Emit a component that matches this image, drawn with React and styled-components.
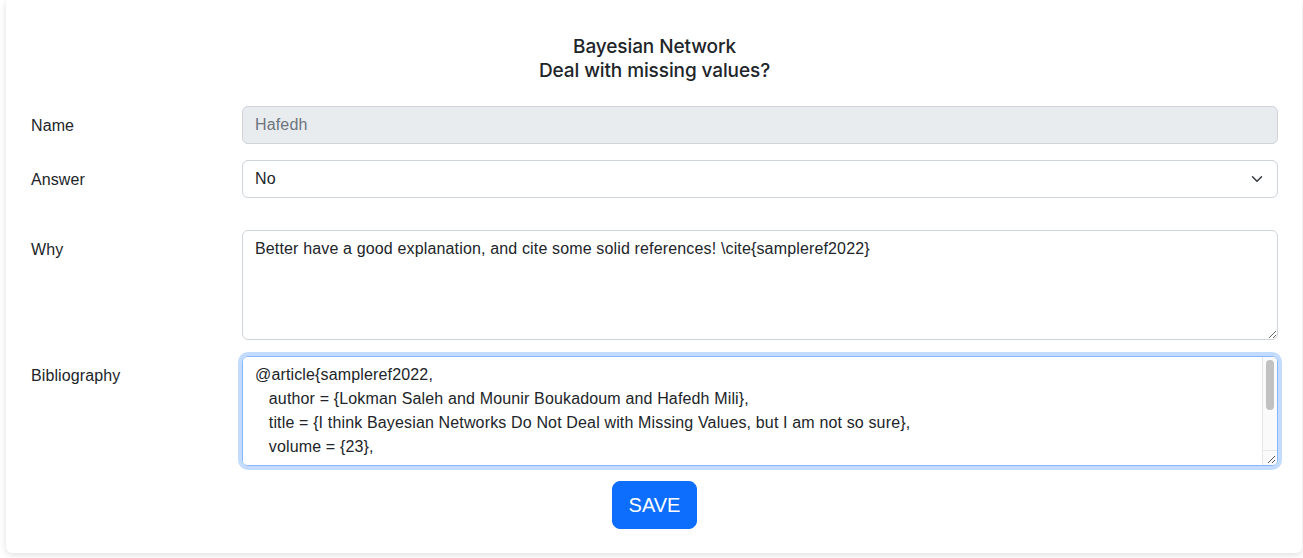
import styled, { createGlobalStyle } from "styled-components";

const GlobalStyle = createGlobalStyle`
  body {
    margin: 0;
    background: #ffffff;
    font-family: "Liberation Sans", Arial, sans-serif;
    color: #212529;
  }
`;

const BIB = `@article{sampleref2022,
   author = {Lokman Saleh and Mounir Boukadoum and Hafedh Mili},
   title = {I think Bayesian Networks Do Not Deal with Missing Values, but I am not so sure},
   volume = {23},
   number = {1},
   pages = {1--12},
   year = {2022},
   journal = {Journal of Sample References}
}`;

const App = () => {
  return (
    <Page>
      <GlobalStyle />
      <Card>
        <Title>
          Bayesian Network
          <br />
          Deal with missing values?
        </Title>

        <Form>
          <Row>
            <Label>Name</Label>
            <Input value="Hafedh" readOnly disabled />
          </Row>

          <Row>
            <Label>Answer</Label>
            <FieldWrap>
              <Select defaultValue="No">
                <option>Yes</option>
                <option>No</option>
              </Select>
              <Chevron viewBox="0 0 16 16" width="16" height="12">
                <path
                  d="m2 5 6 6 6-6"
                  fill="none"
                  stroke="#343a40"
                  strokeWidth="2"
                  strokeLinecap="round"
                  strokeLinejoin="round"
                />
              </Chevron>
            </FieldWrap>
          </Row>

          <Row $gapTop={16}>
            <Label>Why</Label>
            <TextArea
              rows={4}
              spellCheck={false}
              defaultValue="Better have a good explanation, and cite some solid references! \cite{sampleref2022}"
            />
          </Row>

          <Row>
            <Label>Bibliography</Label>
            <FieldWrap>
              <TextArea rows={4} spellCheck={false} $focused defaultValue={BIB} />
              <BottomClip />
              <ScrollTrack>
                <ScrollThumb />
                <ResizeCorner>
                  <svg width="13" height="13" viewBox="0 0 13 13">
                    <path d="M11 4 4 11M11 8 8 11" stroke="#555" strokeWidth="1" />
                  </svg>
                </ResizeCorner>
              </ScrollTrack>
            </FieldWrap>
          </Row>

          <Actions>
            <SaveButton>SAVE</SaveButton>
          </Actions>
        </Form>
      </Card>
    </Page>
  );
};

export default App;

const Page = styled.div`
  padding: 0 1px 5px 6px;
  height: 558px;
  box-sizing: border-box;
  overflow: hidden;
`;

const Card = styled.div`
  background: #ffffff;
  height: 553px;
  box-sizing: border-box;
  padding: 35px 24px 24px 25px;
  border-radius: 0 0 6px 6px;
  box-shadow: 0 2px 7px rgba(0, 0, 0, 0.13);
`;

const Title = styled.h5`
  margin: 0 0 23px;
  text-align: center;
  font-family: Inter, "Liberation Sans", sans-serif;
  font-size: 19px;
  font-weight: 500;
  line-height: 24px;
  letter-spacing: -0.1px;
  color: #212529;
`;

const Form = styled.div`
  display: flex;
  flex-direction: column;
`;

const Row = styled.div`
  display: grid;
  grid-template-columns: 211px 1fr;
  margin-top: ${(p) => p.$gapTop || 0}px;
  margin-bottom: 16px;
`;

const Label = styled.label`
  padding-top: 8px;
  font-size: 16px;
  line-height: 24px;
  letter-spacing: 0.1px;
`;

const fieldBase = `
  width: 100%;
  box-sizing: border-box;
  font-family: "Liberation Sans", Arial, sans-serif;
  font-size: 16px;
  line-height: 24px;
  letter-spacing: 0.15px;
  padding: 6px 12px;
  border: 1px solid #ced4da;
  border-radius: 6px;
  color: #212529;
  background: #ffffff;
  outline: none;
  margin: 0;
`;

const Input = styled.input`
  ${fieldBase}
  height: 38px;
  background: #e9ecef;
  color: #6c757d;
  -webkit-text-fill-color: #6c757d;
  opacity: 1;
`;

const FieldWrap = styled.div`
  position: relative;
`;

const Select = styled.select`
  ${fieldBase}
  height: 38px;
  appearance: none;
  -webkit-appearance: none;
  padding-right: 36px;
`;

const Chevron = styled.svg`
  position: absolute;
  right: 13px;
  top: 13px;
  pointer-events: none;
`;

const TextArea = styled.textarea`
  ${fieldBase}
  height: 110px;
  resize: vertical;
  display: block;
  white-space: pre-wrap;
  padding-right: ${(p) => (p.$focused ? "28px" : "12px")};
  border-color: ${(p) => (p.$focused ? "#86b7fe" : "#ced4da")};
  box-shadow: ${(p) =>
    p.$focused ? "0 0 0 4px rgba(13, 110, 253, 0.25)" : "none"};
`;

const BottomClip = styled.div`
  position: absolute;
  left: 1px;
  right: 16px;
  bottom: 1px;
  height: 7px;
  background: #ffffff;
  border-radius: 0 0 0 5px;
  pointer-events: none;
`;

const ScrollTrack = styled.div`
  position: absolute;
  top: 1px;
  right: 1px;
  bottom: 1px;
  width: 14px;
  background: #fafafa;
  border-left: 1px solid #e8e8e8;
  border-radius: 0 5px 5px 0;
  display: flex;
  flex-direction: column;
  justify-content: space-between;
  pointer-events: none;
`;

const ScrollThumb = styled.div`
  margin: 3px 3px 0 3px;
  height: 50px;
  background: #c1c1c1;
  border-radius: 4px;
`;

const ResizeCorner = styled.div`
  height: 15px;
  border-top: 1px solid #e8e8e8;
  display: flex;
  align-items: flex-end;
  justify-content: flex-end;
  box-sizing: border-box;
`;

const Actions = styled.div`
  display: flex;
  justify-content: center;
  margin-top: -1px;
`;

const SaveButton = styled.button`
  font-family: "Liberation Sans", Arial, sans-serif;
  font-size: 20px;
  line-height: 30px;
  padding: 8px 16px;
  border: 1px solid #0d6efd;
  border-radius: 8px;
  background: #0d6efd;
  color: #ffffff;
  cursor: pointer;
`;
